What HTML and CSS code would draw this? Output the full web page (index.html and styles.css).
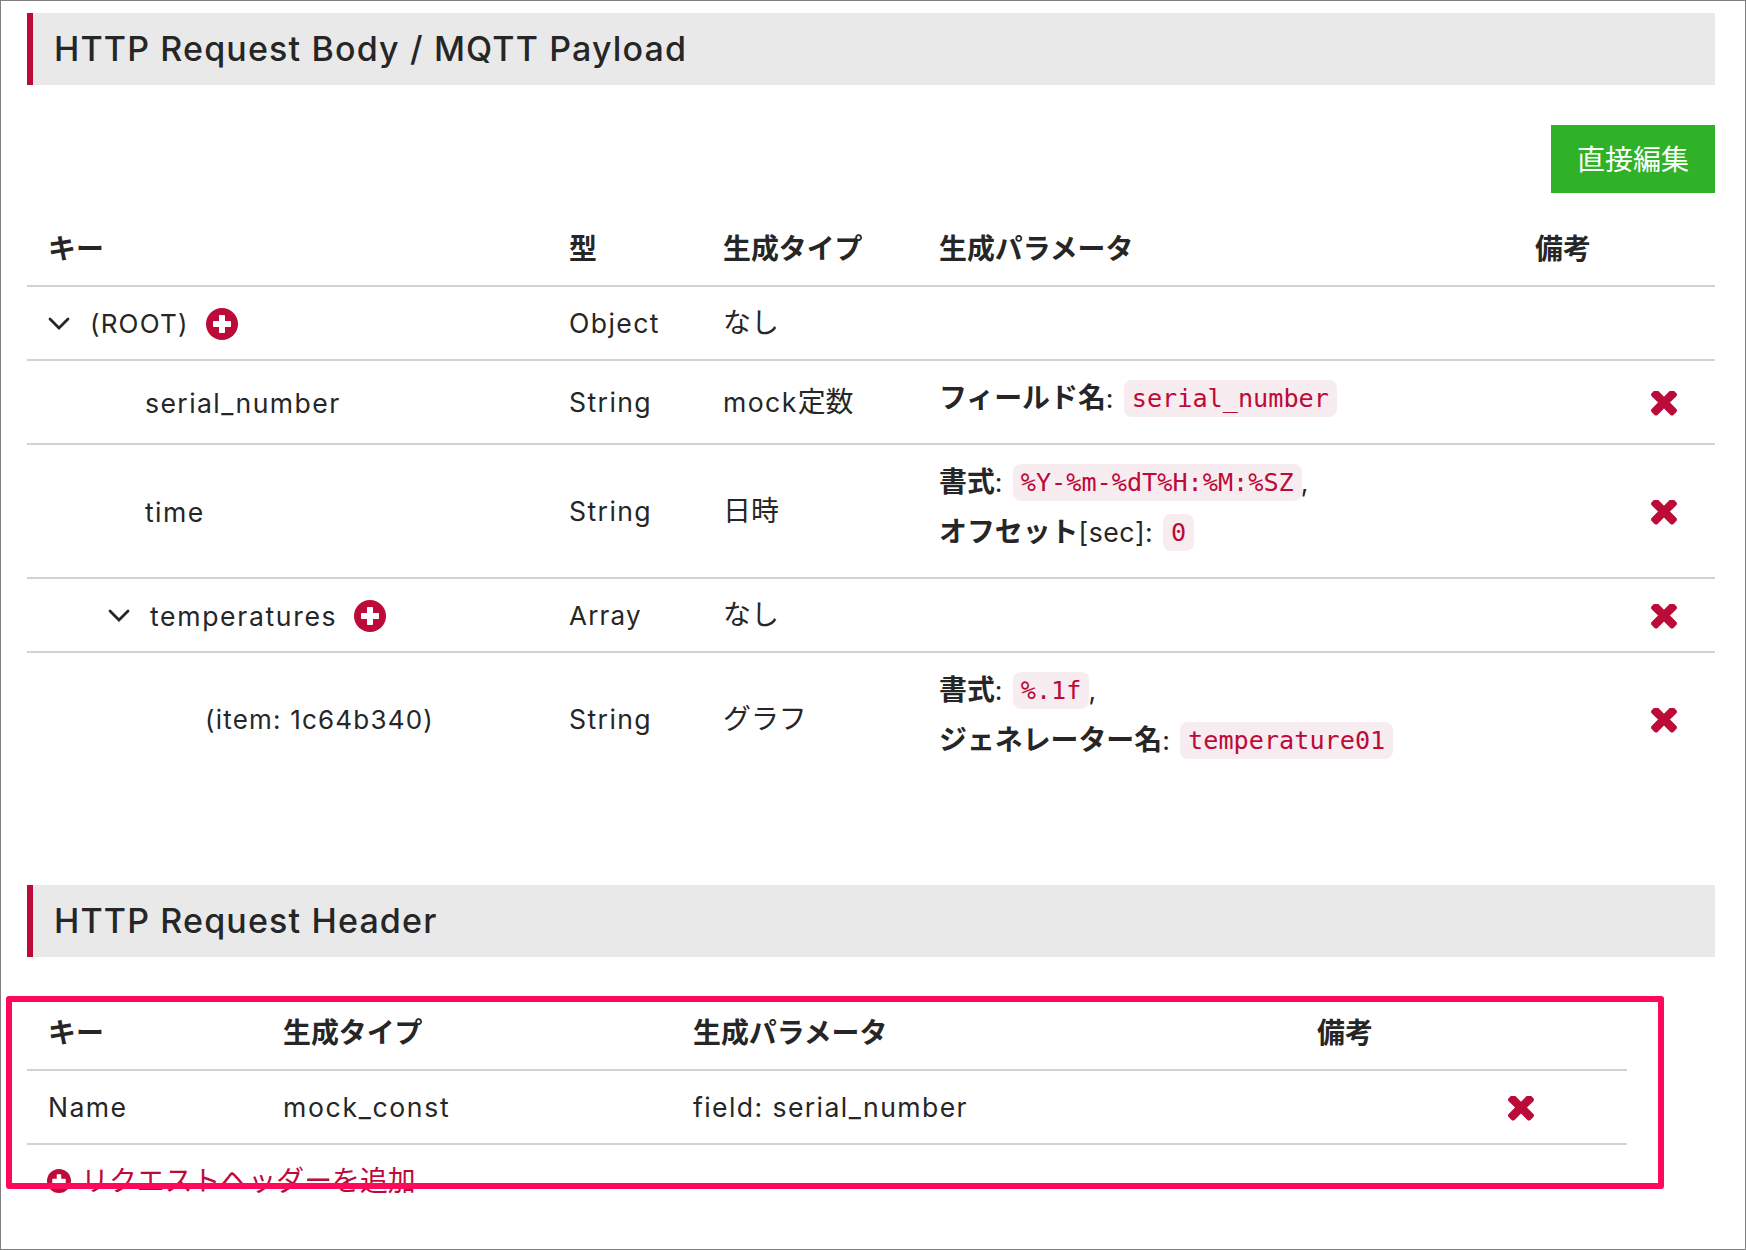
FILE: index.html
```html
<!DOCTYPE html>
<html lang="ja">
<head>
  <meta charset="UTF-8">
  <meta name="viewport" content="width=device-width, initial-scale=1.0">
  <title>HTTP Request Body / MQTT Payload</title>
  <link rel="stylesheet" href="styles.css">
</head>
<body>
  <!-- icons -->
  <svg class="sprite" width="0" height="0">
    <symbol id="plus" viewBox="0 0 32 32">
      <circle cx="16" cy="16" r="16"/>
      <path d="M13.8 7h4.4q.8 0 .8.8V13h5.2q.8 0 .8.8v4.4q0 .8-.8.8H19v5.2q0 .8-.8.8h-4.4q-.8 0-.8-.8V19H7.800q-.8 0-.8-.8v-4.400q0-.8.8-.8H13V7.800q0-.8.8-.8z" fill="#fff"/>
    </symbol>
    <symbol id="times" viewBox="302 302 1188 1188">
      <path d="M1490 1194q0 40-28 68l-136 136q-28 28-68 28t-68-28l-294-294-294 294q-28 28-68 28t-68-28l-136-136q-28-28-28-68t28-68l294-294-294-294q-28-28-28-68t28-68l136-136q28-28 68-28t68 28l294 294 294-294q28-28 68-28t68 28l136 136q28 28 28 68t-28 68l-294 294 294 294q28 28 28 68z"/>
    </symbol>
    <symbol id="chevron" viewBox="0 0 22 14">
      <path d="M2 2l9 9L20 2" fill="none" stroke="#262626" stroke-width="2.8" stroke-linecap="round" stroke-linejoin="miter"/>
    </symbol>
  </svg>

  <main class="page">
    <h2 class="section-title body-title">HTTP Request Body / MQTT Payload</h2>
    <div class="toolbar">
      <button class="btn-edit">直接編集</button>
    </div>

    <table class="params body-table">
      <colgroup>
        <col class="c-key"><col class="c-type"><col class="c-gen"><col class="c-param"><col class="c-note"><col>
      </colgroup>
      <thead>
        <tr><th>キー</th><th>型</th><th>生成タイプ</th><th>生成パラメータ</th><th>備考</th><th></th></tr>
      </thead>
      <tbody>
        <tr>
          <td>
            <div class="key">
              <svg class="chevron"><use href="#chevron"/></svg>
              <span class="en tight">(ROOT)</span>
              <svg class="plus"><use href="#plus"/></svg>
            </div>
          </td>
          <td><span class="en">Object</span></td>
          <td>なし</td>
          <td></td>
          <td></td>
          <td></td>
        </tr>
        <tr>
          <td><div class="key leaf-1"><span class="en">serial_number</span></div></td>
          <td><span class="en">String</span></td>
          <td><span class="en">mock</span>定数</td>
          <td class="detail"><b>フィールド名</b><span class="en">: </span><code>serial_number</code></td>
          <td></td>
          <td><svg class="times"><use href="#times"/></svg></td>
        </tr>
        <tr>
          <td><div class="key leaf-1"><span class="en">time</span></div></td>
          <td><span class="en">String</span></td>
          <td>日時</td>
          <td class="detail">
            <b>書式</b><span class="en">: </span><code>%Y-%m-%dT%H:%M:%SZ</code><span class="en comma">,</span><br>
            <b>オフセット</b><span class="en sec">[sec]</span><span class="en">: </span><code>0</code>
          </td>
          <td></td>
          <td><svg class="times"><use href="#times"/></svg></td>
        </tr>
        <tr>
          <td>
            <div class="key level-1">
              <svg class="chevron"><use href="#chevron"/></svg>
              <span class="en wide">temperatures</span>
              <svg class="plus"><use href="#plus"/></svg>
            </div>
          </td>
          <td><span class="en tight">Array</span></td>
          <td>なし</td>
          <td></td>
          <td></td>
          <td><svg class="times"><use href="#times"/></svg></td>
        </tr>
        <tr>
          <td><div class="key leaf-2"><span class="en tight">(item: 1c64b340)</span></div></td>
          <td><span class="en">String</span></td>
          <td>グラフ</td>
          <td class="detail">
            <b>書式</b><span class="en">: </span><code>%.1f</code><span class="en comma">,</span><br>
            <b>ジェネレーター名</b><span class="en">: </span><code>temperature01</code>
          </td>
          <td></td>
          <td><svg class="times"><use href="#times"/></svg></td>
        </tr>
      </tbody>
    </table>

    <h2 class="section-title">HTTP Request Header</h2>
    <div class="header-area">
      <table class="params header-table">
        <colgroup>
          <col class="h-key"><col class="h-gen"><col class="h-param"><col class="h-note"><col>
        </colgroup>
        <thead>
          <tr><th>キー</th><th>生成タイプ</th><th>生成パラメータ</th><th>備考</th><th></th></tr>
        </thead>
        <tbody>
          <tr>
            <td><span class="en">Name</span></td>
            <td><span class="en wide">mock_const</span></td>
            <td><span class="en">field: serial_number</span></td>
            <td></td>
            <td><svg class="times"><use href="#times"/></svg></td>
          </tr>
        </tbody>
      </table>
      <a class="add-header"><svg class="plus small"><use href="#plus"/></svg>リクエストヘッダーを追加</a>
      <div class="highlight"></div>
    </div>
  </main>
</body>
</html>
```
FILE: styles.css
```css
* {
  box-sizing: border-box;
}
body {
  margin: 0;
  font-family: Inter, "Noto Sans CJK JP", sans-serif;
  font-size: 27.9px;
  line-height: 50px;
  color: #262626;
  background-color: #fff;
}
.sprite {
  position: absolute;
}
.page {
  height: 1250px;
  padding: 12px 30px 0 26px;
  border: 1px solid #808080;
  overflow: hidden;
}
svg {
  display: block;
  fill: #bc0a39;
}

/* headings */
.section-title {
  height: 72px;
  margin: 0;
  padding-left: 21px;
  border-left: 6px solid #bc0a39;
  background-color: #e9e9e9;
  font-size: 34px;
  font-weight: 500;
  line-height: 72px;
  letter-spacing: 1.15px;
}

.toolbar {
  display: flex;
  justify-content: flex-end;
  margin: 40px 0 20px;
}
.btn-edit {
  width: 164px;
  height: 68px;
  padding: 0 0 2px;
  border: none;
  background-color: #2fb227;
  color: #fff;
  font-family: inherit;
  font-size: 28px;
}

/* tables */
.params {
  table-layout: fixed;
  border-collapse: separate;
  border-spacing: 0;
}
.body-table {
  width: 1688px;
  margin-bottom: 100px;
}
.header-table {
  width: 1600px;
}
.params th,
.params td {
  height: 74px;
  padding: 11px 0 11px 21px;
  border-bottom: 2px solid #d3d3d3;
  text-align: left;
  vertical-align: middle;
  white-space: nowrap;
}
.params td.detail {
  padding: 12px 0 20px 21px;
}
.body-table tbody tr:last-child td {
  border-bottom: none;
}
.c-key { width: 521px; }
.c-type { width: 154px; }
.c-gen { width: 216px; }
.c-param { width: 596px; }
.c-note { width: 116px; }
.h-key { width: 235px; }
.h-gen { width: 410px; }
.h-param { width: 624px; }
.h-note { width: 191px; }

.en {
  font-size: 26.6px;
  line-height: 1;
  letter-spacing: 1.4px;
}
.tight {
  font-size: 26px;
  letter-spacing: 1.2px;
}
.wide {
  letter-spacing: 1.65px;
}
.sec {
  letter-spacing: 0.5px;
}
.comma {
  margin-left: -1px;
}
.key {
  display: flex;
  align-items: center;
  padding-top: 2px;
}
.level-1 { padding-left: 60px; }
.leaf-1 { padding-left: 97px; }
.leaf-2 { padding-left: 157px; }
.chevron {
  width: 22px;
  height: 14px;
  margin-right: 20px;
}
.plus {
  width: 32px;
  height: 32px;
  margin-left: 17px;
}
.times {
  width: 26px;
  height: 26px;
  margin-top: 4px;
}
code {
  padding: 4px 8px;
  border-radius: 8px;
  background-color: #f7ecf0;
  color: #bc0a39;
  font-family: "DejaVu Sans Mono", monospace;
  font-size: 25.2px;
  line-height: 1;
  vertical-align: 1px;
}

/* request header */
.header-area {
  position: relative;
  margin-top: 40px;
}
.add-header {
  display: flex;
  align-items: center;
  padding: 11px 0 0 20px;
  color: #bc0a39;
}
.small {
  width: 24px;
  height: 24px;
  margin: 0 10px 0 0;
}
.highlight {
  position: absolute;
  top: -1px;
  left: -21px;
  width: 1658px;
  height: 193px;
  border: 6px solid #ff0a5a;
  border-radius: 3px;
}
```
